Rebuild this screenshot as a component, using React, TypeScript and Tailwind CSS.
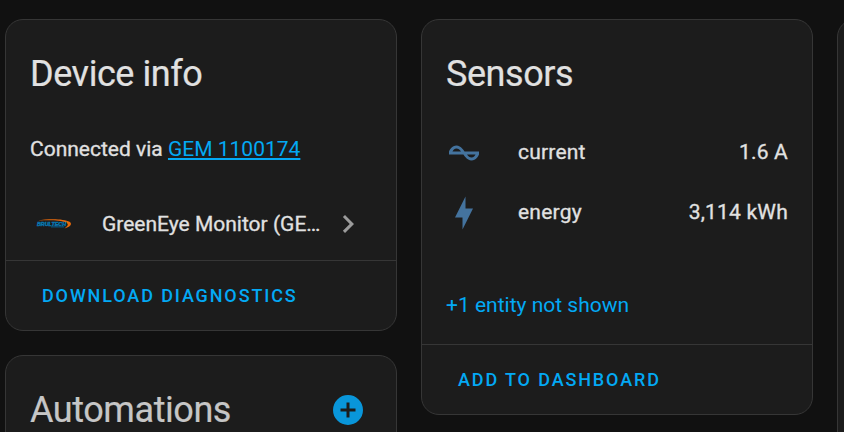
import React from 'react';

const ICONS = {
  current:
    'M12.43 11C12.28 10.84 10 7 7 7S2.32 10.18 2 11V13H11.57C11.72 13.16 14 17 17 17S21.68 13.82 22 13V11H12.43M7 9C8.17 9 9.18 9.85 10 11H4.31C4.78 10.17 5.54 9 7 9M17 15C15.83 15 14.82 14.16 14 13H19.69C19.22 13.83 18.46 15 17 15Z',
  flash: 'M11 15H6L13 1V9H18L11 23V15Z',
  chevron: 'M8.59,16.58L13.17,12L8.59,7.41L10,6L16,12L10,18L8.59,16.58Z',
  plusCircle:
    'M17,13H13V17H11V13H7V11H11V7H13V11H17M12,2A10,10 0 0,0 2,12A10,10 0 0,0 12,22A10,10 0 0,0 22,12A10,10 0 0,0 12,2Z',
};

const Icon: React.FC<{ path: string; className?: string }> = ({ path, className = '' }) => (
  <svg viewBox="0 0 24 24" className={`size-9 shrink-0 fill-current ${className}`}>
    <path d={path} />
  </svg>
);

const Card: React.FC<{ className?: string; children?: React.ReactNode }> = ({ className = '', children }) => (
  <section className={`flex w-[392px] shrink-0 flex-col rounded-[18px] border border-[#363636] bg-[#1c1c1c] ${className}`}>
    {children}
  </section>
);

const Title: React.FC<{ children: React.ReactNode }> = ({ children }) => (
  <h1 className="text-[36px] leading-[72px] tracking-[-0.012em] [-webkit-text-stroke:0.2px]">{children}</h1>
);

const CardAction: React.FC<{ label: string }> = ({ label }) => (
  <div className="flex h-[70px] items-center border-t border-[#363636] px-9">
    <button className="text-lg font-medium tracking-[0.104em] text-[#03a9f4] uppercase">{label}</button>
  </div>
);

const BrultechLogo = () => (
  <svg viewBox="0 0 36 12" className="h-3 w-9 shrink-0">
    <path d="M1.5 2.6C12 .4 28 .6 33.5 3.8C37 6.2 34 9 28.5 10.4C32 8 33 6 30 4.4C24 1.9 12 1.9 1.5 2.6Z" fill="#e8690b" />
    <text
      x="1"
      y="8"
      textLength="29"
      lengthAdjust="spacingAndGlyphs"
      strokeWidth="0.4"
      className="fill-[#0877b0] stroke-[#0877b0] font-['Liberation_Sans'] text-[5px] font-bold italic"
    >
      BRULTECH
    </text>
    <path d="M15 8.9H28" stroke="#075f8f" strokeWidth="1" />
  </svg>
);

const SENSORS = [
  { name: 'current', value: '1.6 A', icon: ICONS.current },
  { name: 'energy', value: '3,114 kWh', icon: ICONS.flash },
];

export default function App() {
  return (
    <div className="flex h-[432px] w-[844px] gap-6 overflow-hidden bg-[#111111] pt-[19px] pl-[5px] font-[Roboto,sans-serif] text-[21px] leading-[30px] text-[#e1e1e1]">
      <div className="flex flex-col gap-6">
        <Card className="h-[312px]">
          <div className="flex-1 px-6 pt-[18px]">
            <Title>Device info</Title>
            <p className="mt-6 [-webkit-text-stroke:0.3px]">
              Connected via{' '}
              <a className="text-[#03a9f4] underline decoration-2 underline-offset-2 [-webkit-text-stroke:0]">GEM 1100174</a>
            </p>
            <div className="mt-[42px] flex h-9 items-center">
              <div className="ml-1.5">
                <BrultechLogo />
              </div>
              <span className="ml-[30px] w-[219px] whitespace-nowrap [-webkit-text-stroke:0.3px]">GreenEye Monitor (GE…</span>
              <Icon path={ICONS.chevron} className="ml-[9px] text-[#9b9b9b]" />
            </div>
          </div>
          <CardAction label="Download diagnostics" />
        </Card>

        <Card className="h-[200px]">
          <div className="flex items-center justify-between pt-[18px] pr-[30px] pl-6 text-[#c6c6c6]">
            <Title>Automations</Title>
            <Icon path={ICONS.plusCircle} className="text-[#0996da]" />
          </div>
        </Card>
      </div>

      <Card className="h-[396px]">
        <div className="flex-1 px-6 pt-[18px]">
          <Title>Sensors</Title>
          <div className="mt-[25px] flex flex-col gap-6">
            {SENSORS.map((sensor) => (
              <div key={sensor.name} className="flex h-9 items-center tracking-[0.01em] [-webkit-text-stroke:0.3px]">
                <Icon path={sensor.icon} className="text-[#44739e]" />
                <span className="-mt-0.5 ml-9 flex-1">{sensor.name}</span>
                <span className="-mt-0.5">{sensor.value}</span>
              </div>
            ))}
          </div>
          <button className="mt-[59px] block text-[#03a9f4]">+1 entity not shown</button>
        </div>
        <CardAction label="Add to dashboard" />
      </Card>

      <Card className="h-[500px]" />
    </div>
  );
}
